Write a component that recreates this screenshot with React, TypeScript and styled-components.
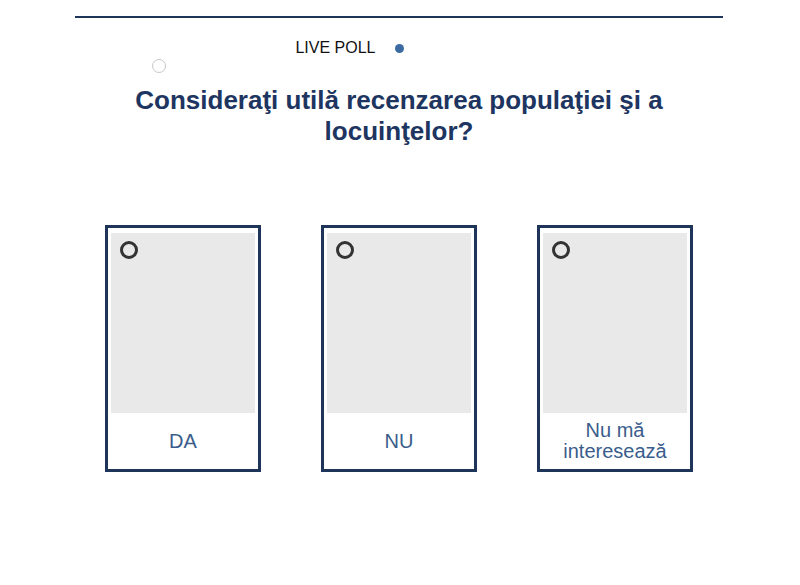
import React from 'react';
import styled, { createGlobalStyle } from 'styled-components';

const GlobalStyle = createGlobalStyle`
  body {
    margin: 0;
    background: #ffffff;
    font-family: "Liberation Sans", Arial, sans-serif;
  }
`;

const options = ['DA', 'NU', 'Nu mă interesează'];

export default function App() {
  return (
    <>
      <GlobalStyle />
      <Page>
        <Poll>
          <Header>
            <Label>LIVE POLL</Label>
            <LiveDot />
            <span />
          </Header>
          <SmallRadio />
          <Question>Consideraţi utilă recenzarea populaţiei şi a locuinţelor?</Question>
          <Cards>
            {options.map((opt) => (
              <Card key={opt}>
                <Picture>
                  <Radio />
                </Picture>
                <Answer>{opt}</Answer>
              </Card>
            ))}
          </Cards>
        </Poll>
      </Page>
    </>
  );
}

const Page = styled.div`
  display: flex;
  justify-content: center;
  padding: 16px 2px 0 0;
`;

const Poll = styled.div`
  width: 648px;
  border-top: 2px solid #1f3459;
`;

const Header = styled.div`
  display: grid;
  grid-template-columns: 1fr auto 1fr;
  align-items: center;
  gap: 19px;
  margin-top: 21px;
  height: 18px;
`;

const Label = styled.span`
  justify-self: end;
  font-size: 16px;
  color: #111;
`;

const LiveDot = styled.span`
  width: 9px;
  height: 9px;
  border-radius: 50%;
  background: #3b6ba0;
`;

const SmallRadio = styled.div`
  width: 12px;
  height: 12px;
  margin: 2px 0 0 77px;
  border: 1px solid #c8c8c8;
  border-radius: 50%;
`;

const Question = styled.h1`
  margin: 12px auto 0;
  width: 600px;
  text-align: center;
  font-size: 26px;
  line-height: 31px;
  font-weight: bold;
  color: #1d3560;
`;

const Cards = styled.div`
  display: flex;
  justify-content: center;
  gap: 60px;
  margin-top: 78px;
`;

const Card = styled.div`
  width: 156px;
  height: 247px;
  box-sizing: border-box;
  border: 3px solid #1f3459;
  padding: 5px 3px 0;
  display: flex;
  flex-direction: column;
`;

const Picture = styled.div`
  position: relative;
  height: 180px;
  background: #e9e9e9;
`;

const Radio = styled.span`
  position: absolute;
  left: 9px;
  top: 8px;
  width: 18px;
  height: 18px;
  box-sizing: border-box;
  border: 3px solid #333;
  border-radius: 50%;
  background: #e9e9e9;
`;

const Answer = styled.div`
  flex: 1;
  display: flex;
  align-items: center;
  justify-content: center;
  text-align: center;
  padding: 0 10px;
  font-size: 20px;
  line-height: 21px;
  color: #3a5d8c;
`;
